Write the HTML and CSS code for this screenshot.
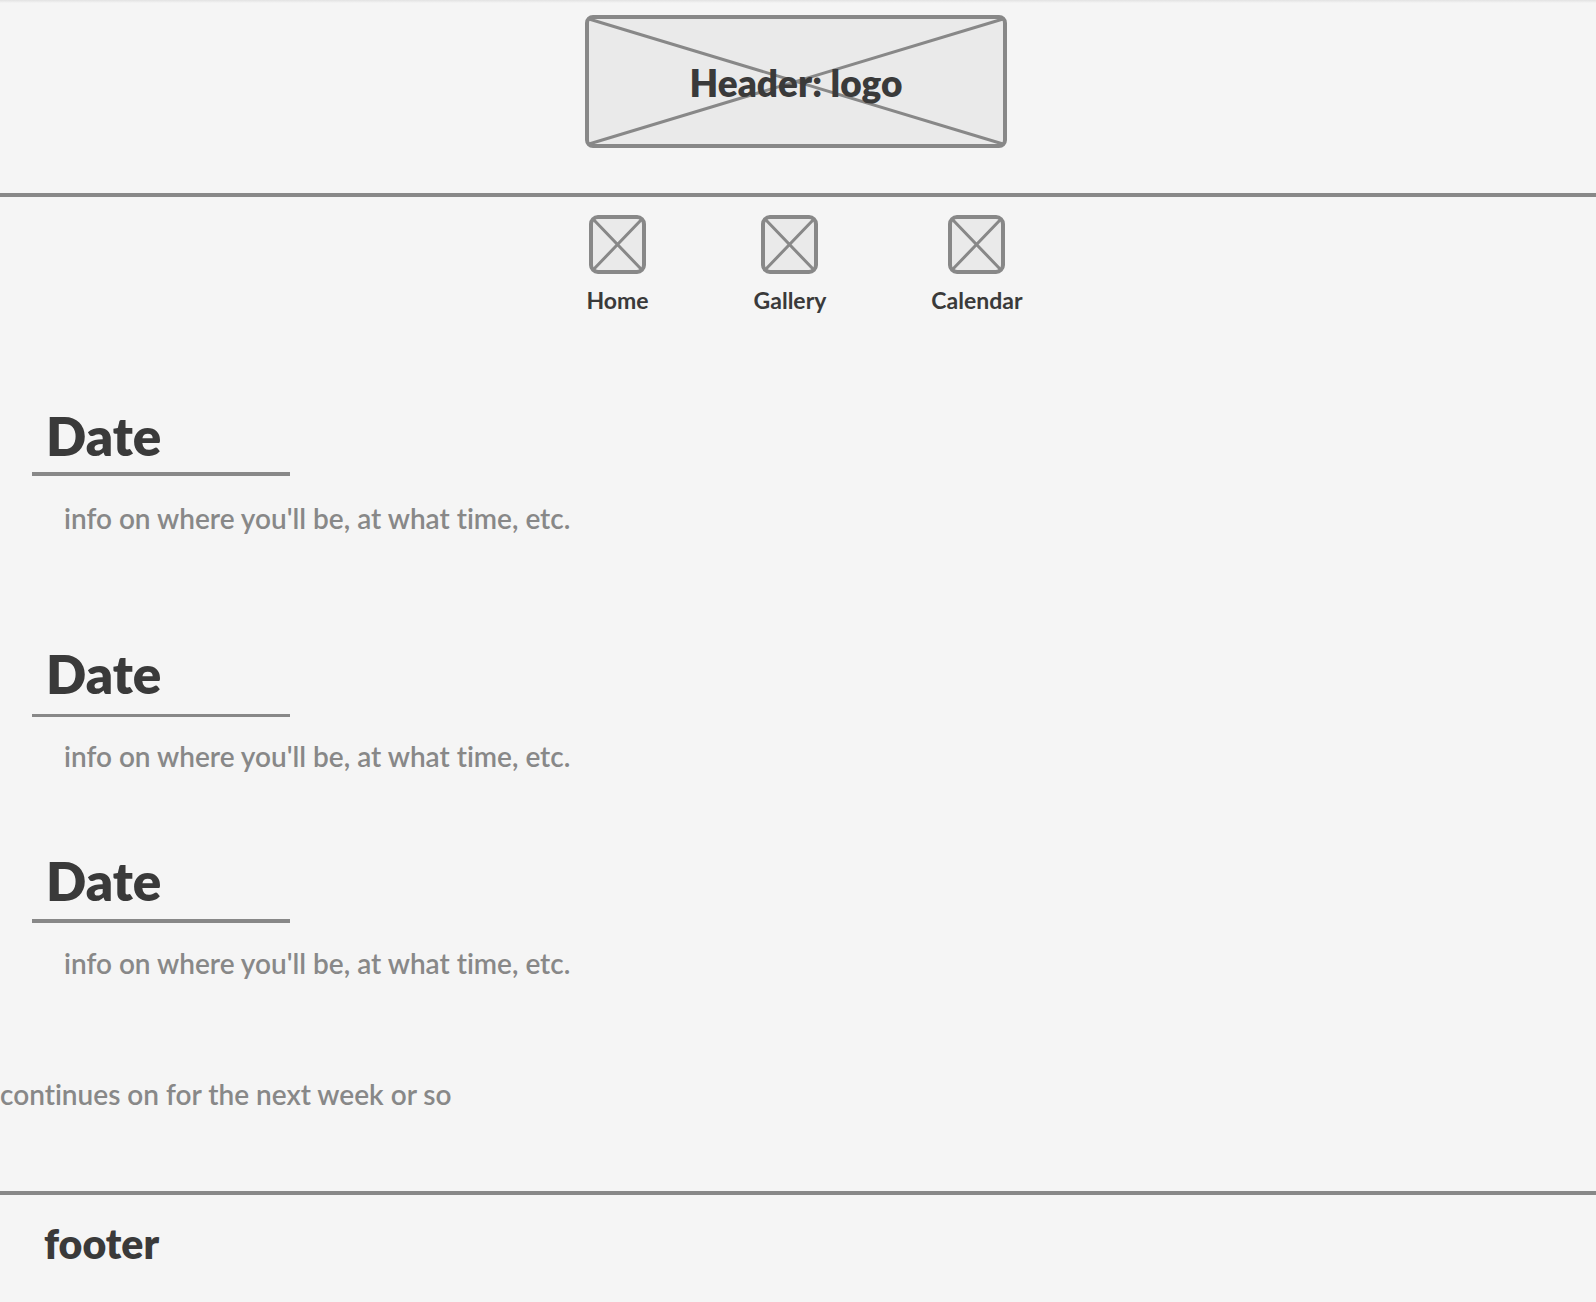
FILE: index.html
```html
<!DOCTYPE html>
<html lang="en">
<head>
<meta charset="utf-8">
<meta name="viewport" content="width=device-width, initial-scale=1">
<title>Calendar</title>
<link rel="stylesheet" href="styles.css">
</head>
<body>
<header class="site-header">
  <div class="logo">
    <svg class="logo-art" viewBox="0 0 422 133" aria-hidden="true">
      <rect x="2" y="2" width="418" height="129" rx="6"/>
      <path d="M4 4 418 129M418 4 4 129"/>
    </svg>
    <h1 class="logo-text">Header: logo</h1>
  </div>
</header>
<nav class="site-nav">
  <a class="nav-link" href="#home">
    <svg class="nav-icon" viewBox="0 0 57 59" aria-hidden="true"><rect x="2" y="2" width="53" height="55" rx="7"/><path d="M4 4 53 55M53 4 4 55"/></svg>
    <span>Home</span>
  </a>
  <a class="nav-link" href="#gallery">
    <svg class="nav-icon" viewBox="0 0 57 59" aria-hidden="true"><rect x="2" y="2" width="53" height="55" rx="7"/><path d="M4 4 53 55M53 4 4 55"/></svg>
    <span>Gallery</span>
  </a>
  <a class="nav-link" href="#calendar">
    <svg class="nav-icon" viewBox="0 0 57 59" aria-hidden="true"><rect x="2" y="2" width="53" height="55" rx="7"/><path d="M4 4 53 55M53 4 4 55"/></svg>
    <span>Calendar</span>
  </a>
</nav>
<main class="schedule">
  <section class="entry entry-first">
    <h2 class="entry-date">Date</h2>
    <p class="entry-info">info on where you'll be, at what time, etc.</p>
  </section>
  <section class="entry entry-second">
    <h2 class="entry-date">Date</h2>
    <p class="entry-info">info on where you'll be, at what time, etc.</p>
  </section>
  <section class="entry entry-third">
    <h2 class="entry-date">Date</h2>
    <p class="entry-info">info on where you'll be, at what time, etc.</p>
  </section>
  <p class="more">continues on for the next week or so</p>
</main>
<footer class="site-footer">footer</footer>
</body>
</html>
```
FILE: styles.css
```css
* {
  box-sizing: border-box;
}

body {
  margin: 0;
  background: #f5f5f5;
  color: #3a3a3a;
  font-family: Lato, "Open Sans", sans-serif;
  font-variant-ligatures: none;
}

h1, h2, p {
  margin: 0;
}

.site-header {
  display: flex;
  justify-content: center;
  padding: 15px 4px 45px 0;
  border-bottom: 4px solid #888;
  background: linear-gradient(#e2e2e2, #f5f5f5 3px);
}

.logo {
  display: grid;
  place-items: center;
}

.logo > * {
  grid-area: 1 / 1;
}

.logo-art {
  width: 422px;
  height: 133px;
}

.logo-art,
.nav-icon {
  display: block;
  fill: #eaeaea;
  stroke: #888;
  stroke-width: 4;
}

.logo-art path,
.nav-icon path {
  stroke-width: 3;
}

.logo-text {
  position: relative;
  padding-top: 2px;
  font-size: 37px;
  font-weight: 800;
  line-height: 44px;
}

.site-nav {
  display: flex;
  justify-content: center;
  gap: 105px;
  padding: 18px 0 0 13px;
}

.nav-link {
  display: flex;
  flex-direction: column;
  align-items: center;
  gap: 12px;
  color: inherit;
  font-size: 23px;
  font-weight: 700;
  line-height: 28px;
  text-decoration: none;
}

.nav-icon {
  width: 57px;
  height: 59px;
}

.schedule {
  padding-top: 90px;
}

.entry {
  padding-left: 32px;
}

.entry-date {
  width: 258px;
  padding-left: 14px;
  border-bottom: 4px solid #888;
  font-size: 53px;
  font-weight: 800;
  line-height: 64px;
}

.entry-info,
.more {
  color: #888;
  font-size: 28px;
  font-weight: 600;
  line-height: 36px;
}

.entry-info {
  padding: 24px 0 0 32px;
}

.entry-first .entry-date {
  padding-bottom: 4px;
}

.entry-second {
  padding-top: 106px;
}

.entry-second .entry-date {
  padding-bottom: 8px;
  border-bottom-width: 3px;
}

.entry-second .entry-info {
  padding-top: 21px;
}

.entry-third {
  padding-top: 75px;
}

.entry-third .entry-date {
  padding-bottom: 6px;
}

.entry-third .entry-info {
  padding-top: 22px;
}

.more {
  padding: 95px 0 79px;
}

.site-footer {
  padding: 25px 44px 19px;
  border-top: 4px solid #888;
  font-size: 41px;
  font-weight: 800;
  line-height: 48px;
}
```
